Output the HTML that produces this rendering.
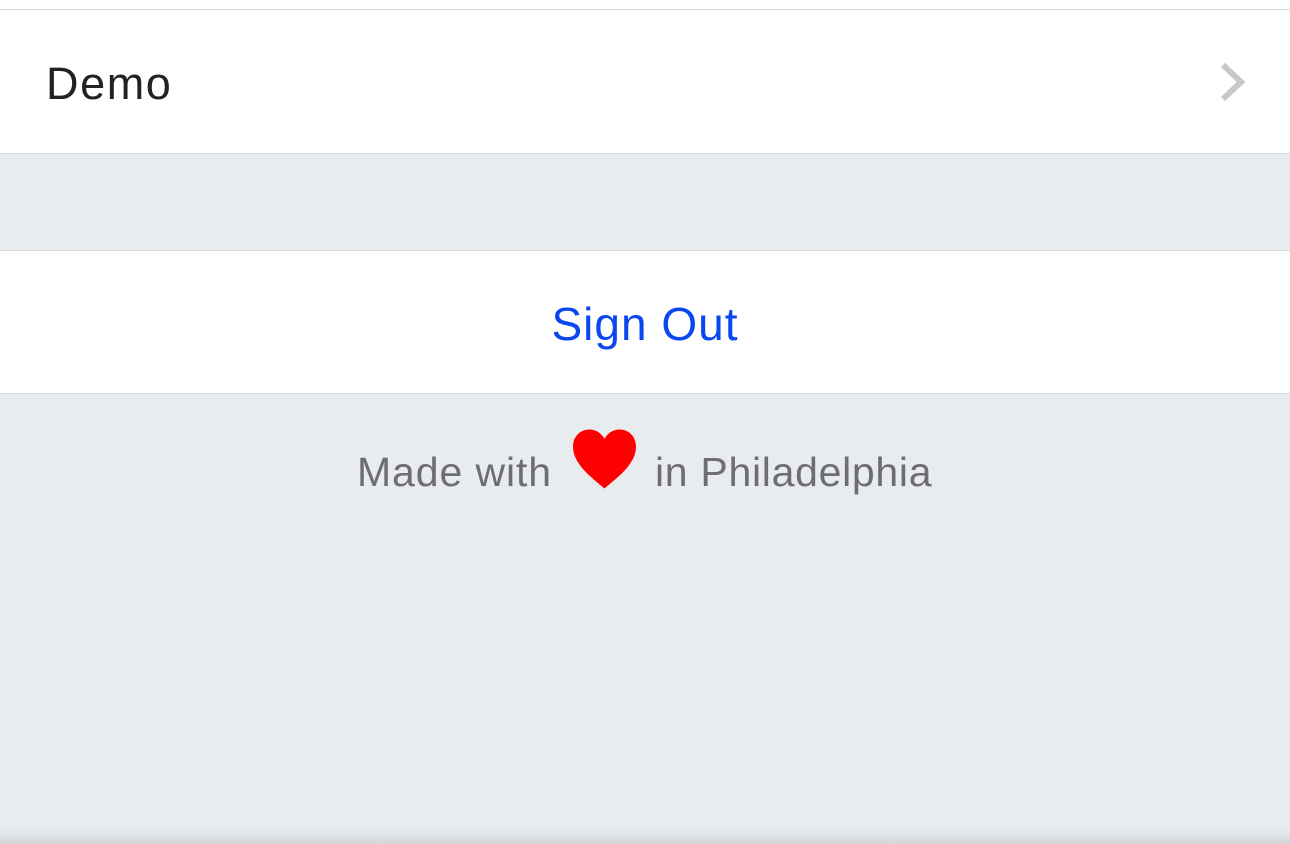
<!DOCTYPE html>
<html><head><style>
body{margin:0;width:1290px;height:844px;background:#e9ecef;position:relative;overflow:hidden;font-family:"Liberation Sans",sans-serif}
.w{position:absolute;left:0;width:1290px;background:#fff}
.l{position:absolute;left:0;width:1290px;height:1px;background:#d9dadc}
</style></head><body>
<div class="w" style="top:0;height:9px"></div>
<div class="l" style="top:9px"></div>
<div class="w" style="top:10px;height:143px"></div>
<div class="l" style="top:153px"></div>
<div class="l" style="top:250px"></div>
<div class="w" style="top:251px;height:142px"></div>
<div class="l" style="top:393px"></div>
<div style="position:absolute;left:46px;top:56px;font-size:45px;color:#222;line-height:56px;letter-spacing:1.6px">Demo</div>
<svg style="position:absolute;left:1216px;top:60px" width="34" height="44"><path d="M7 5 L25 22 L7 39" stroke="#c7c7cc" stroke-width="6" fill="none"/></svg>
<div style="position:absolute;left:0;width:1290px;top:296px;text-align:center;font-size:46px;color:#0a47ee;line-height:56px;letter-spacing:1px">Sign Out</div>
<div style="position:absolute;left:357px;top:447px;font-size:41px;color:#6d6d72;line-height:50px;letter-spacing:0.9px">Made with</div>
<svg style="position:absolute;left:572px;top:428px" width="65" height="62" viewBox="0 0 64 60"><path d="M32 59 C22 50 1 36 1 18 C1 7 9 1 17 1 C24 1 29 5 32 10 C35 5 40 1 47 1 C55 1 63 7 63 18 C63 36 42 50 32 59Z" fill="#fe0000"/></svg>
<div style="position:absolute;left:655px;top:447px;font-size:41px;color:#6d6d72;line-height:50px;letter-spacing:0.7px">in Philadelphia</div>
<div style="position:absolute;left:0;top:828px;width:1290px;height:16px;background:linear-gradient(#e9ecef,#d4d6d8)"></div>
</body></html>
